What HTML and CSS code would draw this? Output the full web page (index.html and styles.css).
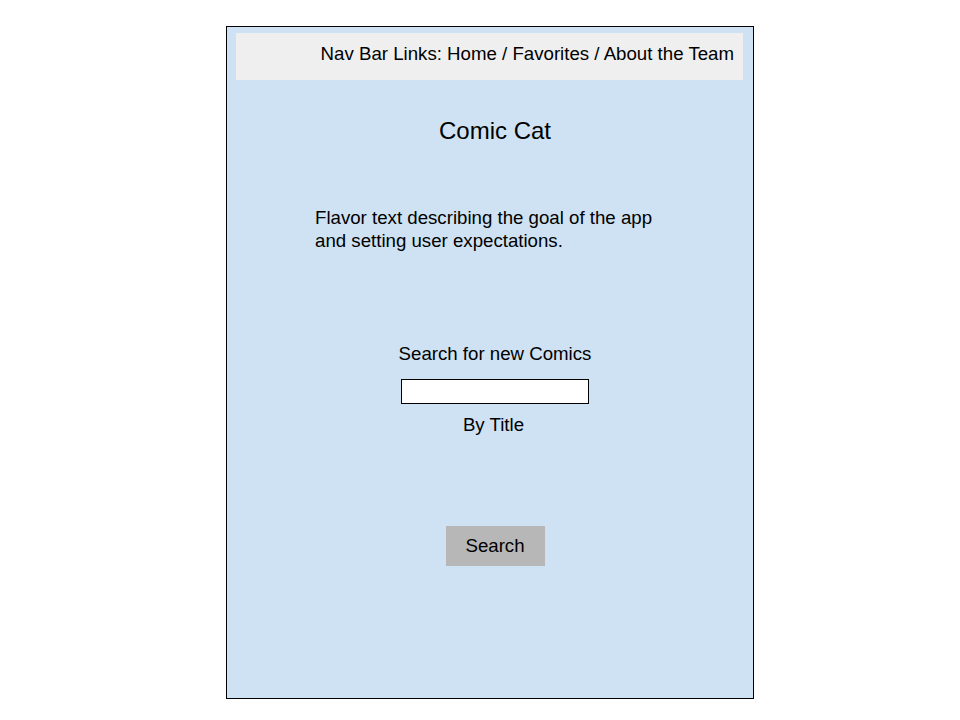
FILE: index.html
```html
<!DOCTYPE html>
<html>
<head>
<meta charset="utf-8">
<link rel="stylesheet" href="styles.css">
</head>
<body>
<div class="frame">
  <div class="nav">Nav Bar Links: Home / Favorites / About the Team</div>
  <div class="center">
    <h1 class="title">Comic Cat</h1>
  </div>
  <p class="flavor">Flavor text describing the goal of the app and setting user expectations.</p>
  <div class="center search">
    <div class="label">Search for new Comics</div>
    <div class="input"></div>
    <div class="by">By Title</div>
    <div class="button">Search</div>
  </div>
</div>
</body>
</html>
```
FILE: styles.css
```css
html, body {
  margin: 0;
  padding: 0;
  background: #ffffff;
}
body {
  font-family: "Liberation Sans", Arial, sans-serif;
  color: #000000;
  padding-top: 26px;
  padding-left: 226px;
}
.frame {
  box-sizing: border-box;
  width: 528px;
  height: 673px;
  border: 1px solid #000000;
  background: #cfe2f3;
  padding-top: 6px;
  display: flex;
  flex-direction: column;
}
.nav {
  box-sizing: border-box;
  margin-left: 9px;
  width: 507px;
  height: 47px;
  background: #efefef;
  font-size: 18.67px;
  line-height: 21px;
  padding-top: 10px;
  padding-right: 9px;
  text-align: right;
  white-space: nowrap;
}
.center {
  display: flex;
  flex-direction: column;
  align-items: center;
  padding-left: 10px;
}
.title {
  margin: 37px 0 0 0;
  font-size: 24px;
  font-weight: normal;
  line-height: 28px;
}
.flavor {
  margin: 61px 0 0 88px;
  width: 370px;
  font-size: 18.67px;
  line-height: 23px;
}
.search {
  margin-top: 91px;
}
.label {
  font-size: 18.67px;
  line-height: 21px;
}
.input {
  box-sizing: border-box;
  margin-top: 15px;
  width: 188px;
  height: 25px;
  border: 1px solid #000000;
  background: #ffffff;
}
.by {
  margin-top: 10px;
  font-size: 18.67px;
  line-height: 21px;
  margin-left: -3px;
}
.button {
  margin-top: 91px;
  width: 99px;
  height: 40px;
  background: #b7b7b7;
  font-size: 18.67px;
  line-height: 40px;
  text-align: center;
}
```
